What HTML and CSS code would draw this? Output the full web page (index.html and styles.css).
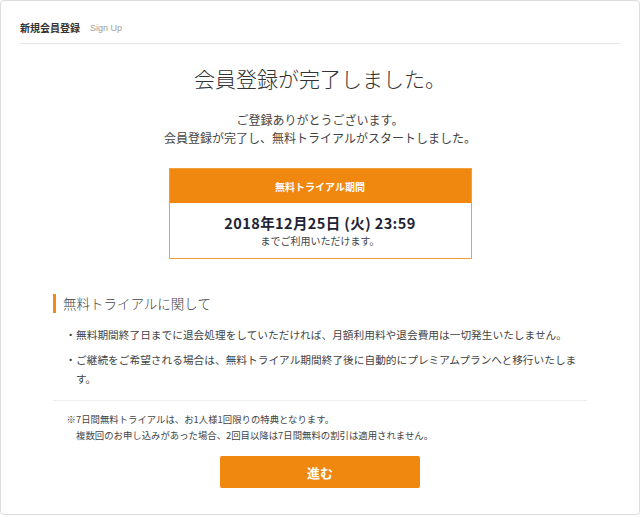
FILE: index.html
```html
<!DOCTYPE html>
<html lang="ja">
<head>
<meta charset="utf-8">
<title>新規会員登録</title>
<link rel="stylesheet" href="styles.css">
</head>
<body>
<div class="card">
  <div class="header">
    <span class="header-title">新規会員登録</span>
    <span class="header-sub">Sign Up</span>
  </div>
  <h1 class="title">会員登録が完了しました。</h1>
  <p class="intro">ご登録ありがとうございます。<br>会員登録が完了し、無料トライアルがスタートしました。</p>
  <div class="period">
    <div class="period-head">無料トライアル期間</div>
    <div class="period-body">
      <div class="period-date">2018年12月25日 (火) 23:59</div>
      <div class="period-note">までご利用いただけます。</div>
    </div>
  </div>
  <div class="section">
    <h2 class="section-title">無料トライアルに関して</h2>
    <ul class="bullets">
      <li>・無料期間終了日までに退会処理をしていただければ、月額利用料や退会費用は一切発生いたしません。</li>
      <li>・ご継続をご希望される場合は、無料トライアル期間終了後に自動的にプレミアムプランへと移行いたします。</li>
    </ul>
    <div class="notes">
      <p class="note">※7日間無料トライアルは、お1人様1回限りの特典となります。<br>複数回のお申し込みがあった場合、2回目以降は7日間無料の割引は適用されません。</p>
    </div>
    <div class="actions">
      <button class="btn" type="button">進む</button>
    </div>
  </div>
</div>
</body>
</html>
```
FILE: styles.css
```css
* { box-sizing: border-box; }
html, body { margin: 0; padding: 0; background: #fff; }
body {
  font-family: "Noto Sans CJK JP", "Noto Sans", sans-serif;
  color: #444;
}
.card {
  width: 640px;
  height: 515px;
  border: 1px solid #dcdcdc;
  border-radius: 4px;
  box-shadow: 1px 1px 2px rgba(0,0,0,0.06);
  overflow: hidden;
}
.header {
  margin: 0 19px;
  padding: 19px 0 7px;
  line-height: 16px;
  border-bottom: 1px solid #e6e6e6;
  display: flex;
  align-items: center;
  gap: 10px;
}
.header-title {
  font-size: 10px;
  font-weight: bold;
  color: #333;
}
.header-sub {
  font-family: "Liberation Sans", "Noto Sans CJK JP", sans-serif;
  font-size: 9px;
  color: #a0a0a0;
}
.title {
  margin: 19px 0 0;
  font-size: 21px;
  line-height: 30px;
  font-weight: 300;
  color: #333;
  text-align: center;
}
.intro {
  margin: 18px 0 0;
  font-size: 12px;
  line-height: 18px;
  color: #444;
  text-align: center;
}
.period {
  width: 303px;
  margin: 21px auto 0;
  border: 1px solid #f0a040;
}
.period-head {
  height: 34px;
  background: #f0870e;
  color: #fff;
  font-size: 10px;
  font-weight: bold;
  display: flex;
  align-items: center;
  justify-content: center;
}
.period-body {
  padding: 10px 0 9px;
  text-align: center;
}
.period-date {
  font-size: 14.5px;
  line-height: 20px;
  font-weight: bold;
  color: #1e2335;
  letter-spacing: 0.4px;
}
.period-note {
  font-size: 10px;
  line-height: 16px;
  color: #444;
}
.section {
  width: 534px;
  margin: 0 auto;
}
.section-title {
  margin: 35px 0 0;
  padding-left: 7px;
  border-left: 3px solid #ef8a1c;
  font-size: 13.5px;
  line-height: 19px;
  font-weight: 300;
  color: #444;
}
.bullets {
  list-style: none;
  margin: 12px 0 0;
  padding: 0;
}
.bullets li {
  font-size: 10.7px;
  line-height: 19px;
  padding-left: 23px;
  text-indent: -1em;
  color: #444;
}
.bullets li + li { margin-top: 6px; }
.notes {
  margin-top: 12px;
  border-top: 1px solid #eeeeee;
  padding-top: 10px;
}
.note {
  margin: 0;
  font-size: 9.4px;
  line-height: 16px;
  padding-left: 23px;
  text-indent: -1em;
  color: #444;
}
.actions {
  margin-top: 13px;
  display: flex;
  justify-content: center;
}
.btn {
  width: 200px;
  height: 32px;
  border: none;
  border-radius: 2px;
  background: #f0870e;
  color: #fff;
  font-family: "Noto Sans CJK JP", sans-serif;
  font-size: 13px;
  font-weight: bold;
  cursor: pointer;
}
```
